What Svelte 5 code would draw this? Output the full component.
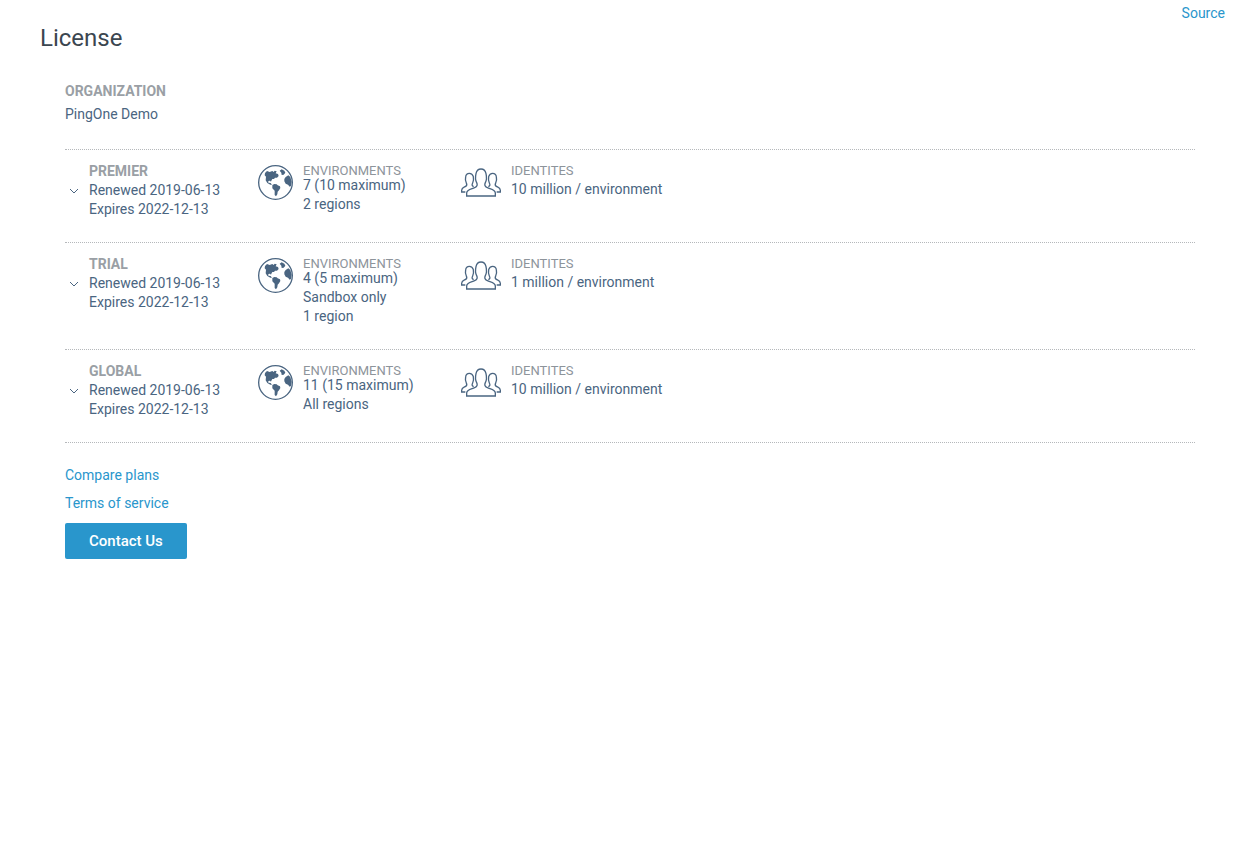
<script>
  const licenses = [
    { name: 'Premier', environments: ['7 (10 maximum)', '2 regions'], identities: '10 million / environment' },
    { name: 'Trial', environments: ['4 (5 maximum)', 'Sandbox only', '1 region'], identities: '1 million / environment' },
    { name: 'Global', environments: ['11 (15 maximum)', 'All regions'], identities: '10 million / environment' },
  ];
</script>

<div class="page">
  <nav><a href="#source">Source</a></nav>
  <main>
    <h1>License</h1>
    <div class="content">
      <h2>Organization</h2>
      <p class="org">PingOne Demo</p>

      <ul>
        {#each licenses as license}
          <li>
            <button class="toggle" aria-label="Expand {license.name}">
              <svg width="10" height="6" viewBox="0 0 10 6"><path d="M1 1l4 4 4-4" /></svg>
            </button>
            <div class="plan">
              <h2>{license.name}</h2>
              <p>Renewed 2019-06-13</p>
              <p>Expires 2022-12-13</p>
            </div>
            <svg class="globe" viewBox="0 0 105 105" aria-hidden="true">
              <circle cx="52.5" cy="52.5" r="50.5" />
              <path d="M21 24L27 18L35 21L43 18L47 21L50 17L56 19L53 25L60 27L62 33L57 38L51 38L48 42L43 42L40 47L39 50L36 47L31 48L31 53L38 54L42 59L37 59L28 54L23 46L24 35L20 31Z" />
              <path d="M43 60L49 57L56 58L59 61L66 64L67 69L63 76L59 80L58 88L54 94L50 90L50 77L43 70Z" />
              <path d="M65 17L71 13L79 17L82 23L77 29L71 30L70 23Z" />
              <path d="M79 42L83 36L91 31L97 36L101 50L99 63L95 65L90 59L83 56L79 49Z" />
            </svg>
            <div class="detail environments">
              <h3>Environments</h3>
              {#each license.environments as line}<p>{line}</p>{/each}
            </div>
            <svg class="people" viewBox="0 0 120 87" aria-hidden="true">
              <path d="M17 84V75C17 65 28 64 41 59C49 56 50 50 47 44C42 35 43 26 45 17C47 7 52 3 60 3S73 7 75 17C77 26 78 35 73 44C70 50 71 56 79 59C92 64 103 65 103 75V84Z" />
              <path d="M13 72H2V67C2 59 9 58 14 55C19 52 18 49 16 45C12 38 13 31 14 26C15 19 19 16 25 16S35 19 37 26C38 32 39 38 35 45C32 50 33 54 38 56" />
              <path d="M107 72H118V67C118 59 111 58 106 55C101 52 102 49 104 45C108 38 107 31 106 26C105 19 101 16 95 16S85 19 83 26C82 32 81 38 85 45C88 50 87 54 82 56" />
            </svg>
            <div class="detail identities">
              <h3>Identites</h3>
              <p>{license.identities}</p>
            </div>
          </li>
        {/each}
      </ul>

      <div class="links">
        <a href="#plans">Compare plans</a>
        <a href="#terms">Terms of service</a>
      </div>
      <button class="contact">Contact Us</button>
    </div>
  </main>
</div>

<style>
  :global(body) { background: #fff; }
  .page {
    position: relative;
    font: 14px/19px "Proxima Nova", Roboto, sans-serif;
    color: #4a6581;
  }
  h1, h2, h3, p, ul { margin: 0; padding: 0; }
  a { color: #2996cc; text-decoration: none; }
  nav { position: absolute; top: 4px; right: 10px; }
  main { padding: 22px 40px; }
  h1 { font-size: 24px; line-height: 32px; font-weight: 400; color: #3b4650; }
  .content { padding: 28px 0 0 25px; }
  h2 { font-size: 14px; line-height: 19px; font-weight: 700; color: #9a9fa5; text-transform: uppercase; }
  .org { padding-top: 4px; }
  ul { list-style: none; margin-top: 25px; border-bottom: 1px dotted #b5b8bb; }
  li {
    display: flex;
    align-items: flex-start;
    padding: 12px 0 23px;
    border-top: 1px dotted #b5b8bb;
  }
  .toggle {
    width: 24px;
    height: 57px;
    padding: 0 0 0 4px;
    border: 0;
    background: none;
    display: flex;
    align-items: center;
  }
  .toggle path { fill: none; stroke: #4a6581; stroke-width: 1; }
  .plan { width: 169px; }
  .globe { width: 35px; height: 35px; margin: 3px 10px 0 0; fill: #4a6581; }
  .globe circle { fill: none; stroke: #4a6581; stroke-width: 4; }
  .detail { padding-top: 2px; }
  h3 { font-size: 13px; line-height: 13px; font-weight: 400; color: #8d949b; text-transform: uppercase; }
  .environments { width: 158px; }
  .environments h3 { margin-bottom: -1px; }
  .identities h3 { margin-bottom: 3px; }
  .people { width: 40px; height: 29px; margin: 6px 10px 0 0; fill: none; stroke: #4a6581; stroke-width: 4; }
  .links { display: flex; flex-direction: column; align-items: flex-start; gap: 9px; padding: 23px 0 10px; }
  .contact {
    height: 36px;
    padding: 0 24px;
    border: 0;
    border-radius: 2px;
    background: #2996cc;
    color: #fff;
    font: 500 15px/20px "Proxima Nova", Roboto, sans-serif;
  }
</style>
